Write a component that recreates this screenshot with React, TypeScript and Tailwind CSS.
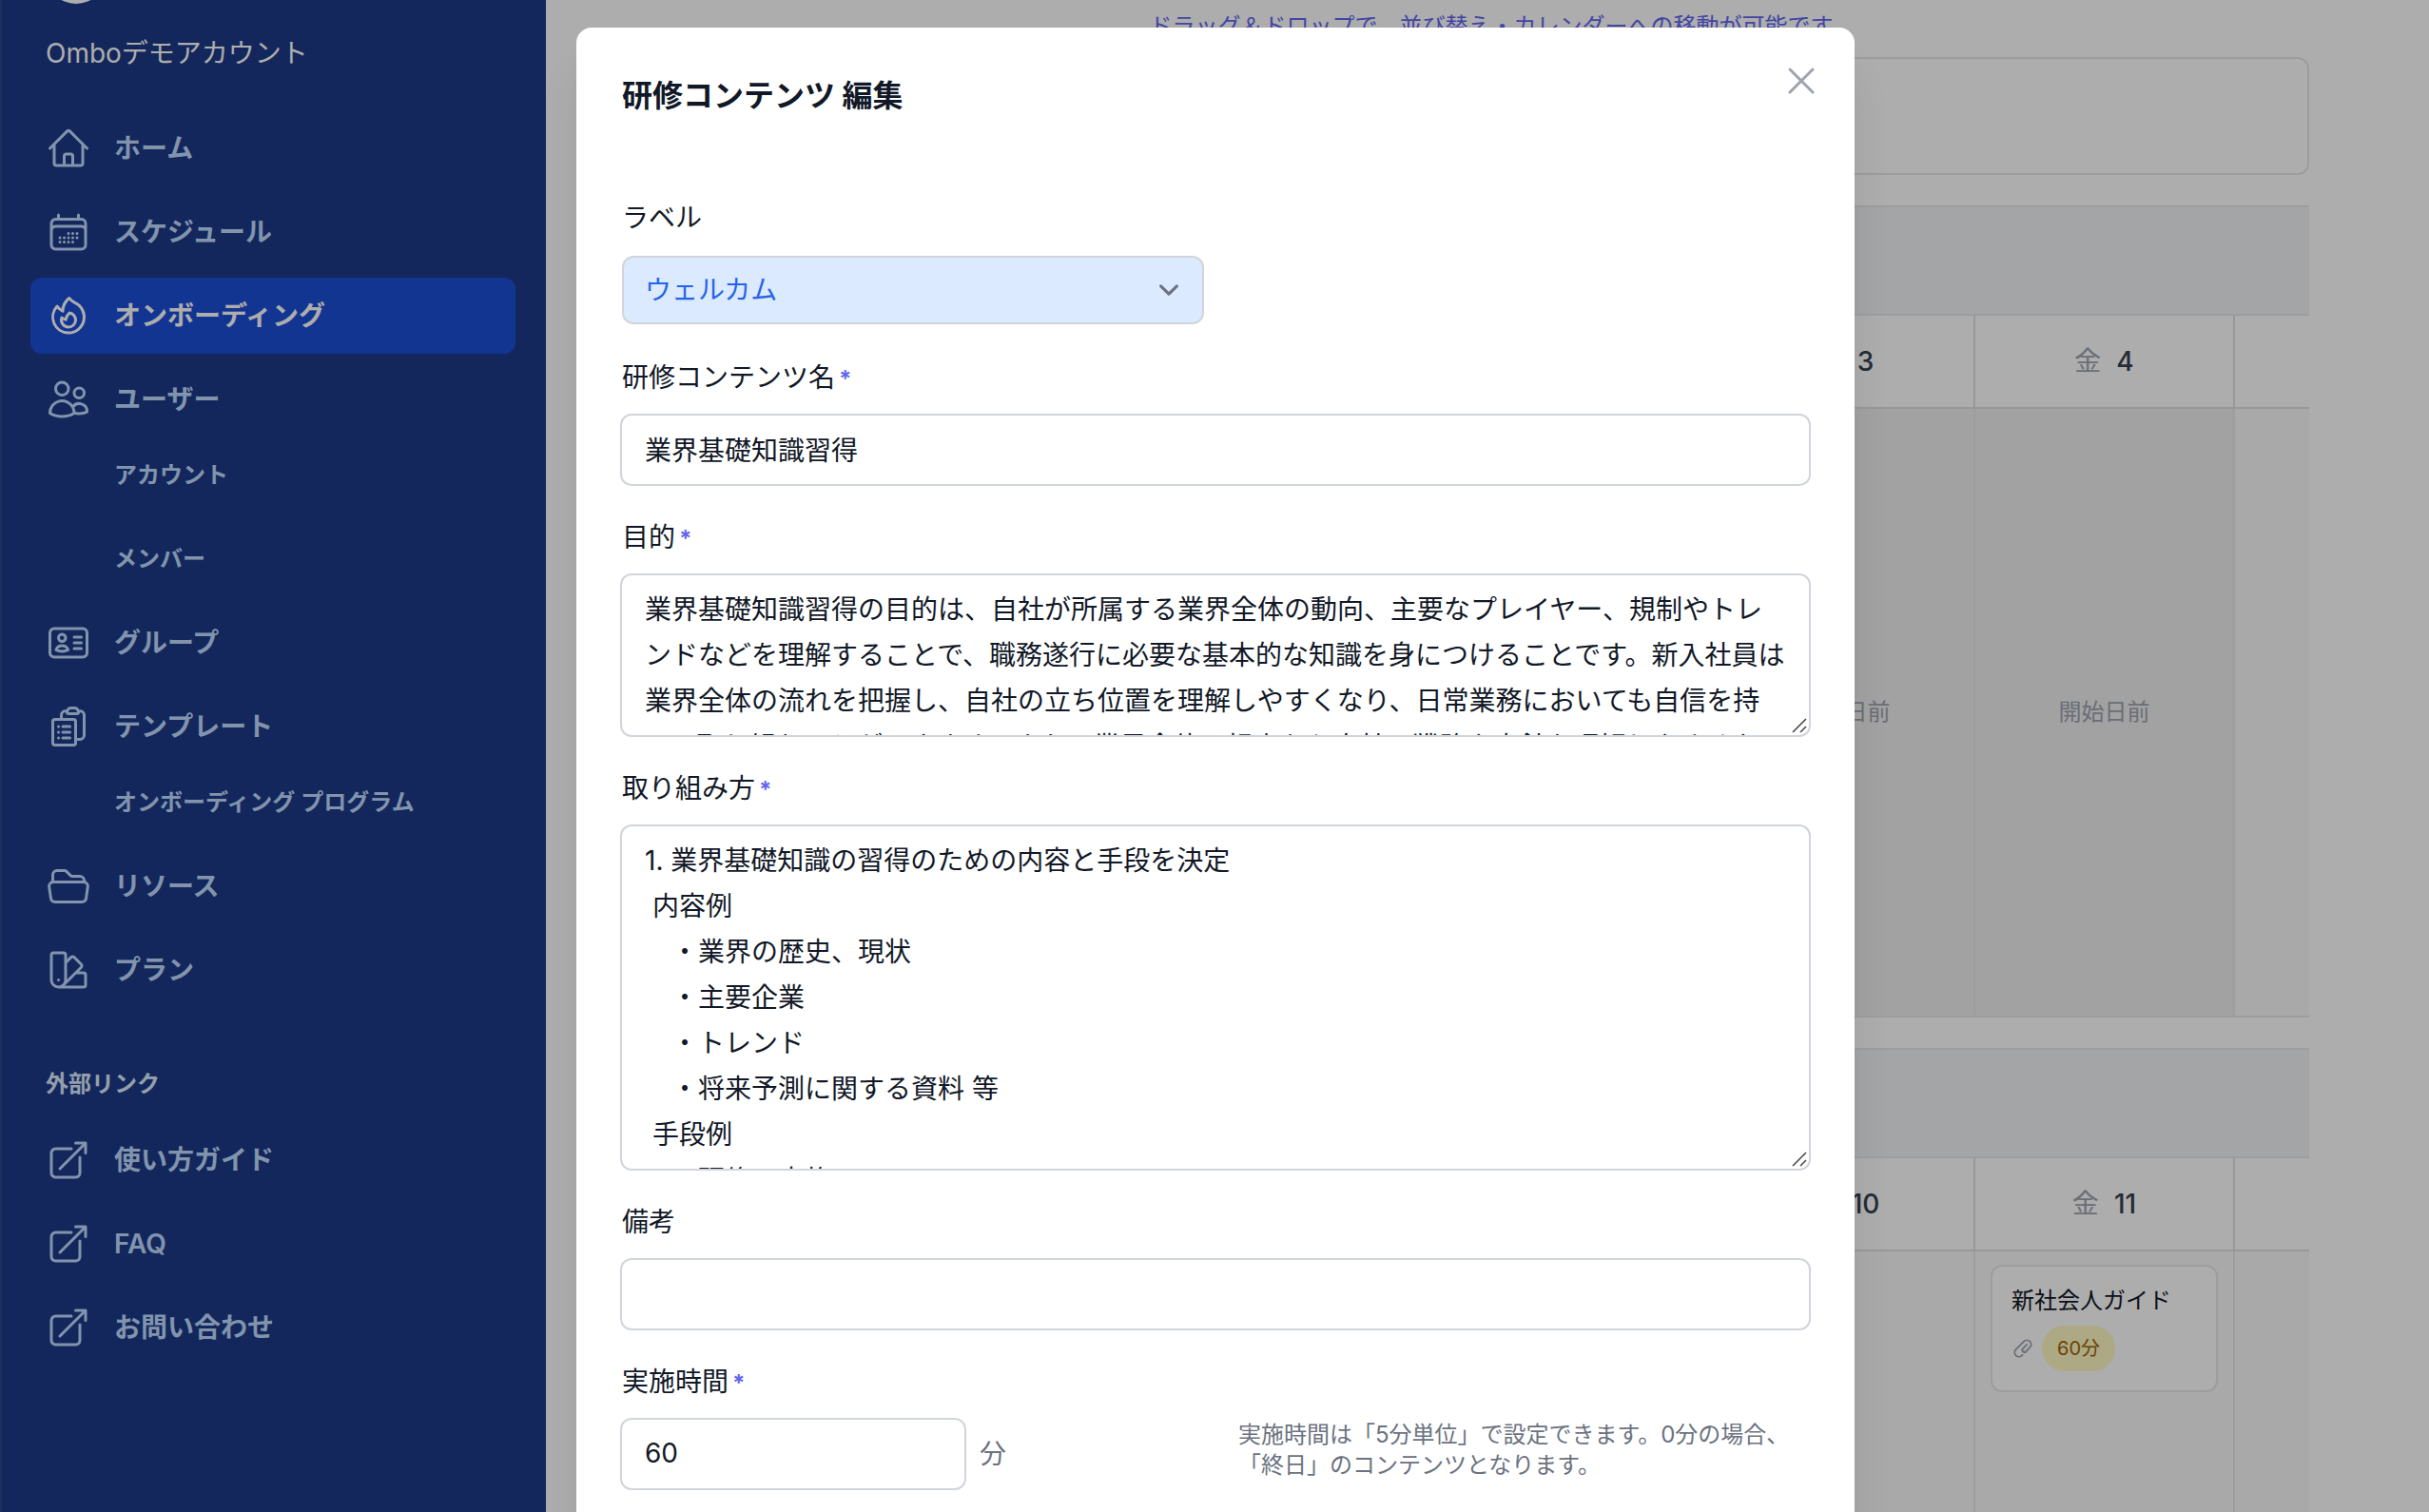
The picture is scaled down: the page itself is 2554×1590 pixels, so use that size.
import { useState } from "react";
import type { ComponentType, ReactNode } from "react";
import {
  HiOutlineArrowTopRightOnSquare,
  HiOutlineCalendarDays,
  HiOutlineClipboardDocumentList,
  HiOutlineFire,
  HiOutlineFolderOpen,
  HiOutlineHome,
  HiOutlineIdentification,
  HiOutlineSwatch,
  HiOutlineUsers,
  HiOutlineXMark,
} from "react-icons/hi2";

type Icon = ComponentType<{ className?: string }>;

type NavItem = {
  label: string;
  icon: Icon;
  active?: boolean;
  children?: string[];
};

const navItems: NavItem[] = [
  { label: "ホーム", icon: HiOutlineHome },
  { label: "スケジュール", icon: HiOutlineCalendarDays },
  { label: "オンボーディング", icon: HiOutlineFire, active: true },
  { label: "ユーザー", icon: HiOutlineUsers, children: ["アカウント", "メンバー"] },
  { label: "グループ", icon: HiOutlineIdentification },
  {
    label: "テンプレート",
    icon: HiOutlineClipboardDocumentList,
    children: ["オンボーディング プログラム"],
  },
  { label: "リソース", icon: HiOutlineFolderOpen },
  { label: "プラン", icon: HiOutlineSwatch },
];

const externalLinks = ["使い方ガイド", "FAQ", "お問い合わせ"];

const purposeText = [
  "業界基礎知識習得の目的は、自社が所属する業界全体の動向、主要なプレイヤー、規制やトレ",
  "ンドなどを理解することで、職務遂行に必要な基本的な知識を身につけることです。新入社員は",
  "業界全体の流れを把握し、自社の立ち位置を理解しやすくなり、日常業務においても自信を持",
  "って取り組むことができます。また、業界全体の視点から自社の戦略や方針を理解しやすくな",
  "ります。",
].join("\n");

const approachText = [
  "1. 業界基礎知識の習得のための内容と手段を決定",
  " 内容例",
  "　・業界の歴史、現状",
  "　・主要企業",
  "　・トレンド",
  "　・将来予測に関する資料 等",
  " 手段例",
  "　・研修の実施",
].join("\n");

function NavLink({ label, icon: IconShape, active }: NavItem) {
  return (
    <a
      href="#"
      className={
        active
          ? "flex h-20 items-center gap-6 rounded-xl bg-[#1d4ed8] px-4 text-white"
          : "flex h-20 items-center gap-6 rounded-xl px-4 text-[#bfdbfe]"
      }
    >
      <IconShape className="size-12 shrink-0" />
      <span className="text-[28px] leading-10 font-semibold">{label}</span>
    </a>
  );
}

function Sidebar() {
  return (
    <aside className="h-full w-[574px] shrink-0 overflow-hidden bg-[#1c3a88] px-8 shadow-[inset_2px_0_0_#2a4688]">
      <div className="-mt-[60px] ml-4 size-16 rounded-full bg-white" />
      <p className="mt-8 ml-4 text-[28px] leading-10 text-white">Omboデモアカウント</p>
      <nav className="mt-10">
        <ul className="flex flex-col gap-2">
          {navItems.map((item) => (
            <li key={item.label}>
              <NavLink {...item} />
              {item.children && (
                <ul className="flex flex-col gap-2">
                  {item.children.map((child) => (
                    <li key={child}>
                      <a
                        href="#"
                        className="flex h-20 items-center pl-[88px] text-2xl font-semibold text-[#bfdbfe]"
                      >
                        {child}
                      </a>
                    </li>
                  ))}
                </ul>
              )}
            </li>
          ))}
        </ul>
        <h2 className="mt-16 mb-6 ml-4 text-2xl font-semibold text-[#dbeafe]">外部リンク</h2>
        <ul className="flex flex-col gap-2">
          {externalLinks.map((label) => (
            <li key={label}>
              <NavLink label={label} icon={HiOutlineArrowTopRightOnSquare} />
            </li>
          ))}
        </ul>
      </nav>
    </aside>
  );
}

type Day = { weekday: string; date: string; blocked?: boolean; event?: string; minutes?: number };

const weeks: Day[][] = [
  [
    { weekday: "", date: "", blocked: true },
    { weekday: "月", date: "31", blocked: true },
    { weekday: "火", date: "1", blocked: true },
    { weekday: "水", date: "2", blocked: true },
    { weekday: "木", date: "3", blocked: true },
    { weekday: "金", date: "4", blocked: true },
    { weekday: "", date: "" },
  ],
  [
    { weekday: "日", date: "6" },
    { weekday: "月", date: "7" },
    { weekday: "火", date: "8" },
    { weekday: "水", date: "9" },
    { weekday: "木", date: "10" },
    { weekday: "金", date: "11", event: "新社会人ガイド", minutes: 60 },
    { weekday: "", date: "" },
  ],
];

function PaperClip() {
  return (
    <svg viewBox="0 0 20 20" fill="currentColor" className="size-6 text-[#9ca3af]" aria-hidden="true">
      <path
        fillRule="evenodd"
        clipRule="evenodd"
        d="M15.621 4.379a3 3 0 0 0-4.242 0l-7 7a3 3 0 0 0 4.241 4.243h.001l.497-.5a.75.75 0 0 1 1.064 1.057l-.498.501-.002.002a4.5 4.5 0 0 1-6.364-6.364l7-7a4.5 4.5 0 0 1 6.368 6.36l-3.455 3.553A2.625 2.625 0 1 1 9.52 9.52l3.45-3.451a.75.75 0 1 1 1.061 1.06l-3.45 3.451a1.125 1.125 0 0 0 1.587 1.595l3.454-3.553a3 3 0 0 0 0-4.242Z"
      />
    </svg>
  );
}

function Week({ days }: { days: Day[] }) {
  return (
    <section>
      <div className="h-[116px] border-y-2 border-[#e5e7eb] bg-[#f0f3f6]" />
      <div className="overflow-hidden pl-1">
        <table className="w-[1911px] table-fixed border-separate border-spacing-0">
          <thead>
            <tr>
              {days.map((day, i) => (
                <th
                  key={i}
                  scope="col"
                  className="h-[98px] border-r-2 border-b-2 border-[#e0e1e3] bg-white p-0 text-[28px] leading-10 font-normal"
                >
                  <span className="flex items-center justify-center gap-4">
                    <span className="text-[#9ca3af]">{day.weekday}</span>
                    <span className="font-medium text-[#374151]">{day.date}</span>
                  </span>
                </th>
              ))}
            </tr>
          </thead>
          <tbody>
            <tr>
              {days.map((day, i) => (
                <td
                  key={i}
                  className={
                    day.blocked
                      ? "h-[640px] border-r-2 border-b-2 border-[#e5e7eb] bg-[#efefef] p-0 text-center align-middle text-2xl text-[#9ca3af]"
                      : "h-[640px] border-r-2 border-b-2 border-[#e5e7eb] bg-[#fafafa] px-4 py-3.5 align-top"
                  }
                >
                  {day.blocked && "開始日前"}
                  {day.event && (
                    <div className="rounded-xl border-2 border-[#e5e7eb] bg-white p-5">
                      <p className="text-2xl text-[#111827]">{day.event}</p>
                      <p className="mt-2.5 flex items-center gap-2">
                        <PaperClip />
                        <span className="rounded-full bg-[#fef9c3] px-4 py-2 text-xl leading-8 text-[#a16207]">
                          {day.minutes}分
                        </span>
                      </p>
                    </div>
                  )}
                </td>
              ))}
            </tr>
          </tbody>
        </table>
      </div>
    </section>
  );
}

function Calendar() {
  return (
    <main className="h-full min-w-0 flex-1 overflow-hidden pt-3 pr-[126px] pl-[134px]">
      <p className="text-center text-2xl text-[#6366f1]">
        ドラッグ＆ドロップで、並び替え・カレンダーへの移動が可能です
      </p>
      <div className="mt-4 h-[124px] rounded-xl border-2 border-[#e5e7eb]" />
      <div className="mt-8 flex flex-col gap-8">
        {weeks.map((days, i) => (
          <Week key={i} days={days} />
        ))}
      </div>
    </main>
  );
}

function Field({
  id,
  label,
  required,
  children,
}: {
  id: string;
  label: string;
  required?: boolean;
  children: ReactNode;
}) {
  return (
    <div className="flex flex-col gap-4">
      <label htmlFor={id} className="text-[28px] leading-[48px]">
        {label}
        {required && <span className="ml-1 text-2xl leading-8 font-bold text-[#6366f1]">*</span>}
      </label>
      {children}
    </div>
  );
}

const inputClass =
  "h-[72px] w-full rounded-[10px] bg-white px-6 pb-0.5 text-[28px] leading-[48px] ring-2 ring-[#d1d5db] outline-none";

function TextArea({ id, rows, defaultValue }: { id: string; rows: number; defaultValue: string }) {
  return (
    <div className="relative">
      <textarea
        id={id}
        rows={rows}
        defaultValue={defaultValue}
        className="block w-full resize-none overflow-hidden rounded-[10px] bg-white py-3 pr-4 pl-6 text-[28px] leading-[48px] ring-2 ring-[#d1d5db] outline-none"
      />
      <svg
        viewBox="0 0 16 16"
        className="pointer-events-none absolute right-0.5 bottom-0.5 size-4"
        fill="none"
        stroke="#444"
        strokeWidth="1.5"
      >
        <path d="M1 15 15 1M9 15l6-6" />
      </svg>
    </div>
  );
}

function EditDialog({ onClose }: { onClose: () => void }) {
  return (
    <div
      role="dialog"
      aria-labelledby="dialog-title"
      className="relative min-h-screen w-full max-w-[1344px] rounded-2xl bg-white px-12 pt-12 pb-16 text-[#111827] shadow-[0_40px_50px_-10px_rgba(0,0,0,0.1),0_16px_20px_-12px_rgba(0,0,0,0.1)]"
    >
      <button
        type="button"
        aria-label="閉じる"
        onClick={onClose}
        className="absolute top-8 right-8 text-[#9ca3af]"
      >
        <HiOutlineXMark className="size-12" />
      </button>
      <h1 id="dialog-title" className="text-[32px] leading-[48px] font-bold">
        研修コンテンツ 編集
      </h1>
      <form className="mt-20 flex flex-col gap-8">
        <Field id="label" label="ラベル">
          <div className="relative w-[612px]">
            <select
              id="label"
              className="h-[72px] w-full appearance-none rounded-xl border-2 border-[#d1d5db] bg-[#dbeafe] px-[22px] text-[28px] leading-10 text-[#2563eb] outline-none"
            >
              <option>ウェルカム</option>
            </select>
            <svg
              viewBox="0 0 20 20"
              className="pointer-events-none absolute inset-y-0 right-4 my-auto size-[42px] text-[#6b7280]"
              fill="none"
              stroke="currentColor"
              strokeWidth="1.5"
              strokeLinecap="round"
              strokeLinejoin="round"
            >
              <path d="m6 8 4 4 4-4" />
            </svg>
          </div>
        </Field>
        <Field id="name" label="研修コンテンツ名" required>
          <input id="name" type="text" defaultValue="業界基礎知識習得" className={inputClass} />
        </Field>
        <Field id="purpose" label="目的" required>
          <TextArea id="purpose" rows={3} defaultValue={purposeText} />
        </Field>
        <Field id="approach" label="取り組み方" required>
          <TextArea id="approach" rows={7} defaultValue={approachText} />
        </Field>
        <Field id="note" label="備考">
          <input id="note" type="text" className={inputClass} />
        </Field>
        <Field id="minutes" label="実施時間" required>
          <div className="flex justify-between">
            <div className="flex items-center gap-4">
              <div className="w-[360px]">
                <input id="minutes" type="text" defaultValue="60" className={inputClass} />
              </div>
              <span className="text-[28px] leading-10 text-[#6b7280]">分</span>
            </div>
            <p className="w-[600px] text-2xl text-[#6b7280]">
              実施時間は「5分単位」で設定できます。0分の場合、「終日」のコンテンツとなります。
            </p>
          </div>
        </Field>
      </form>
    </div>
  );
}

export default function App() {
  const [open, setOpen] = useState(true);
  return (
    <div className="relative flex h-screen overflow-hidden bg-white font-['Inter','Noto_Sans_CJK_JP',sans-serif]">
      <Sidebar />
      <Calendar />
      {open && (
        <div className="absolute inset-0 flex items-start justify-center overflow-hidden bg-black/32 pt-[29px] pl-0.5">
          <EditDialog onClose={() => setOpen(false)} />
        </div>
      )}
    </div>
  );
}
